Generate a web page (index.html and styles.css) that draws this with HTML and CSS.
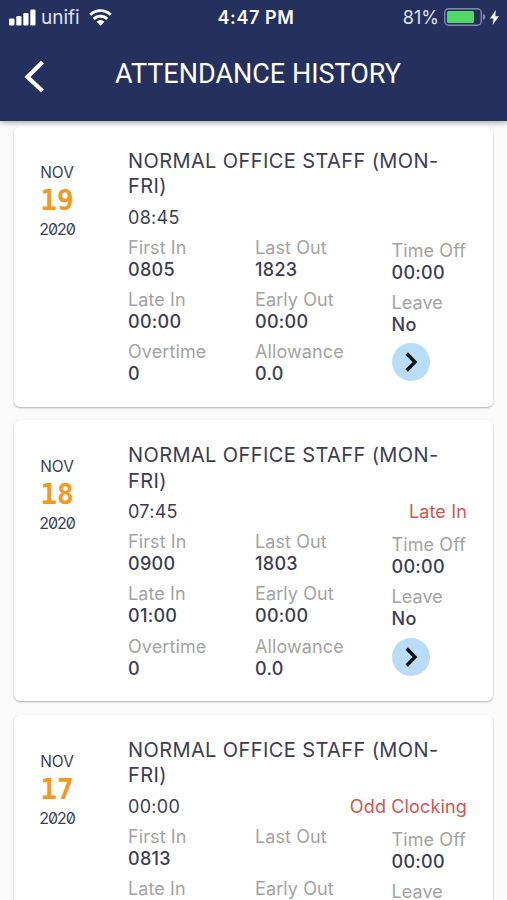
FILE: index.html
```html
<!DOCTYPE html>
<html lang="en">
<head>
  <meta charset="UTF-8">
  <meta name="viewport" content="width=device-width, initial-scale=1.0">
  <title>Attendance History</title>
  <link rel="stylesheet" href="styles.css">
</head>
<body>
  <header class="header">
    <div class="status-bar">
      <div class="status-left">
        <svg class="signal" width="27" height="17" viewBox="0 0 27 17" fill="#fff">
          <rect x="0" y="9.5" width="5.5" height="7" rx="1.3"/>
          <rect x="7.3" y="7" width="5.2" height="9.5" rx="1.3"/>
          <rect x="14.3" y="4" width="5.2" height="12.5" rx="1.3"/>
          <rect x="21.3" y="0.5" width="5.2" height="16" rx="1.3"/>
        </svg>
        <span class="carrier">unifi</span>
        <svg class="wifi" width="23" height="17" viewBox="0 0 23 17">
          <path d="M1.2 5.8a14.6 14.6 0 0 1 20.6 0M4.8 10a9.5 9.5 0 0 1 13.4 0" fill="none" stroke="#fff" stroke-width="2.8"/>
          <path d="M7.6 12.7a5.6 5.6 0 0 1 7.8 0L11.5 16.8z" fill="#fff"/>
        </svg>
      </div>
      <span class="clock">4:47 PM</span>
      <div class="status-right">
        <span class="percent">81%</span>
        <svg class="battery" width="42" height="18" viewBox="0 0 42 18">
          <rect x="0.7" y="0.7" width="36.6" height="16.6" rx="4" fill="none" stroke="#8089a8" stroke-width="1.4"/>
          <rect x="3" y="3" width="27" height="12" rx="1.5" fill="#4fd964"/>
          <path d="M39 6c3 .6 3 5.4 0 6z" fill="#8089a8"/>
        </svg>
        <svg class="bolt" width="9" height="15" viewBox="0 0 9 15">
          <path d="M5.8 0L0 8.4h3.6L2.6 15 9 6.2H5.3z" fill="#fff"/>
        </svg>
      </div>
    </div>
    <div class="nav">
      <svg class="back" width="22" height="34" viewBox="0 0 22 34">
        <path d="M18.5 2L3.5 17l15 14" fill="none" stroke="#fff" stroke-width="4.2"/>
      </svg>
      <h1 class="title">ATTENDANCE HISTORY</h1>
    </div>
  </header>

  <main class="list">
    <div class="card">
      <div class="date">
        <span class="month">NOV</span>
        <span class="day">19</span>
        <span class="year">2020</span>
      </div>
      <div class="details">
        <h2 class="shift">NORMAL OFFICE STAFF (MON-FRI)</h2>
        <div class="hours"><span>08:45</span></div>
        <div class="stats">
          <div class="col">
            <div class="stat"><span class="label">First In</span><span class="value">0805</span></div>
            <div class="stat"><span class="label">Late In</span><span class="value">00:00</span></div>
            <div class="stat"><span class="label">Overtime</span><span class="value">0</span></div>
          </div>
          <div class="col">
            <div class="stat"><span class="label">Last Out</span><span class="value">1823</span></div>
            <div class="stat"><span class="label">Early Out</span><span class="value">00:00</span></div>
            <div class="stat"><span class="label">Allowance</span><span class="value">0.0</span></div>
          </div>
          <div class="col col-last">
            <div class="stat"><span class="label">Time Off</span><span class="value">00:00</span></div>
            <div class="stat"><span class="label">Leave</span><span class="value">No</span></div>
            <div class="more">
              <svg width="38" height="38" viewBox="0 0 38 38"><path d="M14.7 10.5l8.3 8.5-8.3 8.5" fill="none" stroke="#111" stroke-width="3.4"/></svg>
            </div>
          </div>
        </div>
      </div>
    </div>

    <div class="card">
      <div class="date">
        <span class="month">NOV</span>
        <span class="day">18</span>
        <span class="year">2020</span>
      </div>
      <div class="details">
        <h2 class="shift">NORMAL OFFICE STAFF (MON-FRI)</h2>
        <div class="hours"><span>07:45</span><span class="alert">Late In</span></div>
        <div class="stats">
          <div class="col">
            <div class="stat"><span class="label">First In</span><span class="value">0900</span></div>
            <div class="stat"><span class="label">Late In</span><span class="value">01:00</span></div>
            <div class="stat"><span class="label">Overtime</span><span class="value">0</span></div>
          </div>
          <div class="col">
            <div class="stat"><span class="label">Last Out</span><span class="value">1803</span></div>
            <div class="stat"><span class="label">Early Out</span><span class="value">00:00</span></div>
            <div class="stat"><span class="label">Allowance</span><span class="value">0.0</span></div>
          </div>
          <div class="col col-last">
            <div class="stat"><span class="label">Time Off</span><span class="value">00:00</span></div>
            <div class="stat"><span class="label">Leave</span><span class="value">No</span></div>
            <div class="more">
              <svg width="38" height="38" viewBox="0 0 38 38"><path d="M14.7 10.5l8.3 8.5-8.3 8.5" fill="none" stroke="#111" stroke-width="3.4"/></svg>
            </div>
          </div>
        </div>
      </div>
    </div>

    <div class="card">
      <div class="date">
        <span class="month">NOV</span>
        <span class="day">17</span>
        <span class="year">2020</span>
      </div>
      <div class="details">
        <h2 class="shift">NORMAL OFFICE STAFF (MON-FRI)</h2>
        <div class="hours"><span>00:00</span><span class="alert">Odd Clocking</span></div>
        <div class="stats">
          <div class="col">
            <div class="stat"><span class="label">First In</span><span class="value">0813</span></div>
            <div class="stat"><span class="label">Late In</span></div>
          </div>
          <div class="col">
            <div class="stat"><span class="label">Last Out</span><span class="value"></span></div>
            <div class="stat"><span class="label">Early Out</span></div>
          </div>
          <div class="col col-last">
            <div class="stat"><span class="label">Time Off</span><span class="value">00:00</span></div>
            <div class="stat"><span class="label">Leave</span></div>
          </div>
        </div>
      </div>
    </div>
  </main>
</body>
</html>
```

FILE: styles.css
```css
* {
  box-sizing: border-box;
}
body {
  margin: 0;
  height: 900px;
  overflow: hidden;
  background: #fafafa;
  font-family: Inter, "Liberation Sans", sans-serif;
  color: #3c3d55;
  display: flex;
  flex-direction: column;
}
.header {
  flex: none;
  height: 121px;
  background: #24305e;
  color: #fff;
  box-shadow: 0 1px 6px rgba(0,0,0,0.4);
  z-index: 1;
}
.status-bar {
  display: grid;
  grid-template-columns: 1fr auto 1fr;
  align-items: center;
  height: 34px;
  padding: 0 8px 0 9px;
}
.status-left,
.status-right {
  display: flex;
  align-items: center;
}
.status-right {
  justify-content: flex-end;
}
.carrier {
  font-size: 19px;
  margin: 0 9px 0 5px;
  color: #dfe3f0;
}
.clock {
  font-size: 18px;
  font-weight: 600;
  letter-spacing: 0.6px;
  padding-left: 4px;
}
.percent {
  font-size: 18px;
  color: #dfe3f0;
  margin-right: 5px;
}
.bolt {
  margin-left: 4px;
}
.nav {
  display: flex;
  align-items: center;
  height: 80px;
  padding-left: 24px;
}
.back {
  margin-top: 5px;
}
.title {
  margin: 0 0 0 69px;
  font-family: Roboto, sans-serif;
  font-size: 27px;
  font-weight: 400;
  white-space: nowrap;
}
.list {
  flex: 1;
  min-height: 0;
  overflow: hidden;
  display: flex;
  flex-direction: column;
  gap: 13.5px;
  padding: 4.5px 14px 0;
}
.card {
  flex: none;
  display: flex;
  height: 281px;
  padding: 23px 26px 0 0;
  background: #fff;
  border-radius: 6px;
  box-shadow: 0 1px 2px rgba(0,0,0,0.3);
}
.date {
  width: 86px;
  padding-top: 11px;
  display: flex;
  flex-direction: column;
  align-items: center;
}
.month {
  font-size: 15.5px;
  line-height: 25px;
}
.day {
  font-family: "DejaVu Sans Mono", monospace;
  font-size: 28px;
  font-weight: bold;
  line-height: 32px;
  color: #f39a1e;
}
.year {
  font-size: 16px;
  line-height: 24px;
  letter-spacing: -1px;
  font-feature-settings: "zero" 1;
}
.details {
  flex: 1;
  margin-left: 28px;
}
.shift {
  margin: 0;
  font-size: 20px;
  font-weight: 400;
  line-height: 25.5px;
  letter-spacing: 0.4px;
}
.hours {
  display: flex;
  justify-content: space-between;
  margin-top: 4px;
  font-size: 18px;
  line-height: 28px;
  letter-spacing: 0.3px;
}
.alert {
  color: #d9534f;
  letter-spacing: 0.15px;
}
.stats {
  display: flex;
  margin-top: 5px;
}
.col {
  width: 127px;
}
.col + .col {
  width: 136.5px;
}
.col.col-last {
  width: auto;
  padding-top: 3px;
  white-space: nowrap;
}
.stat {
  display: flex;
  flex-direction: column;
  height: 52.3px;
  font-size: 18px;
  line-height: 22px;
  letter-spacing: 0.1px;
}
.label {
  color: #a3a3a3;
}
.value {
  font-weight: 500;
  letter-spacing: 0.3px;
}
.more {
  width: 38px;
  height: 38px;
  margin-top: -1px;
  border-radius: 50%;
  background: #b9dcf8;
}
.more svg {
  display: block;
}
```
